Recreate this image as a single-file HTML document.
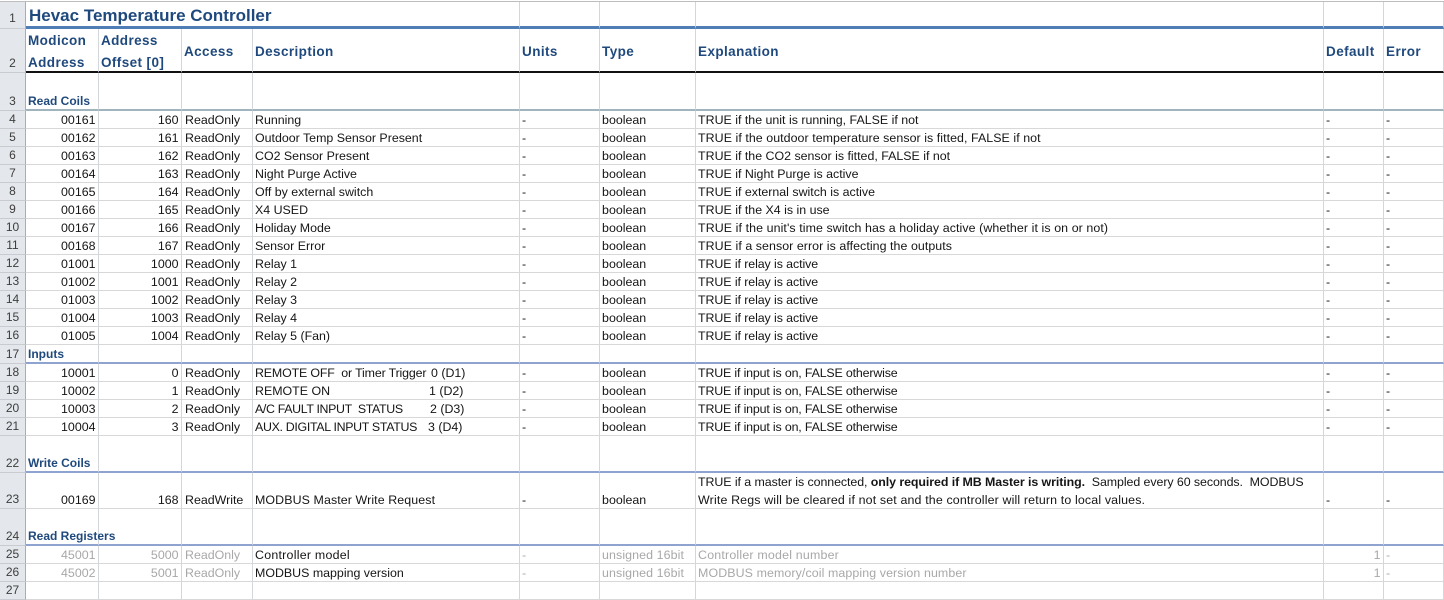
<!DOCTYPE html>
<html><head><meta charset="utf-8"><title>Hevac Temperature Controller</title>
<style>
html,body{margin:0;padding:0;background:#fff;width:1444px;height:600px;overflow:hidden}
table{position:absolute;left:0;top:1px;border-collapse:separate;border-spacing:0;table-layout:fixed;width:1444px;font:12.4px/16px "Liberation Sans",sans-serif;color:#151515;border-top:1px solid #bdbdbd}
td{box-sizing:border-box;padding:0 0 0 2px;border-right:1px solid #d3d6da;border-bottom:1px solid #d8d8d8;vertical-align:bottom;white-space:pre;overflow:visible}
td:nth-child(4){padding-left:3px}
td:first-child{background:#e4e7eb;text-align:center;padding:0;border-right:1px solid #a9adb2;border-bottom:1px solid #c8cbcf;color:#3d3d3d;font-size:12px;line-height:17px}
td.n{text-align:right;padding:0 2.5px 0 0}
.g td{color:#a8a8a8}.g td:first-child{color:#3d3d3d}.g td.k{color:#151515}
.r1 td{border-bottom:3px solid #4f7db5}
.r1 td:first-child{border-bottom:1px solid #c8cbcf;line-height:19px}
.r1 .t{font-size:17px;font-weight:bold;color:#1f497d;line-height:22px;padding-left:3px}
.r1 .t span{position:relative;top:1px}
.r2 td{border-bottom:2px solid #111;color:#1f497d;font-weight:bold;font-size:13.5px;letter-spacing:.4px;line-height:22px;vertical-align:middle;padding:3px 0 0 2px}
.r2 td div{margin:-2px 0 -3px}
.r2 td:first-child{border-bottom:1px solid #c8cbcf;color:#3d3d3d;font-weight:normal;font-size:12px;letter-spacing:0;vertical-align:bottom;line-height:17px;padding:0}
.h td{color:#1f497d}.h td:first-child{color:#3d3d3d}.h td.b{font-weight:bold;font-size:12px}
.h3 td{border-bottom:2px solid #9fb4bd}.h4 td{border-bottom:2px solid #8ea3cf}
.h3 td:first-child,.h4 td:first-child{border-bottom:1px solid #c8cbcf}
i{font-style:normal;display:inline-block}
b{font-weight:bold}
.w{line-height:18px;margin-bottom:-1px}
.s1{letter-spacing:-.16px}.s2{letter-spacing:-.08px}
</style></head><body>
<table>
<colgroup><col style="width:26px"><col style="width:73px"><col style="width:83px"><col style="width:71px"><col style="width:267px"><col style="width:80px"><col style="width:96px"><col style="width:628px"><col style="width:60px"><col style="width:60px"></colgroup>
<tr class="r1" style="height:27px"><td>1</td><td class="t" colspan="4"><span>Hevac Temperature Controller</span></td><td></td><td></td><td></td><td></td><td></td></tr>
<tr class="r2" style="height:44px"><td>2</td><td><div>Modicon
Address</div></td><td><div>Address
Offset [0]</div></td><td>Access</td><td>Description</td><td>Units</td><td>Type</td><td>Explanation</td><td>Default</td><td>Error</td></tr>
<tr class="h h3" style="height:38px"><td>3</td><td class="b">Read Coils</td><td></td><td></td><td></td><td></td><td></td><td></td><td></td><td></td></tr>
<tr style="height:18px"><td>4</td><td class="n">00161</td><td class="n">160</td><td>ReadOnly</td><td>Running</td><td>-</td><td>boolean</td><td>TRUE if the unit is running, FALSE if not</td><td>-</td><td>-</td></tr>
<tr style="height:18px"><td>5</td><td class="n">00162</td><td class="n">161</td><td>ReadOnly</td><td>Outdoor Temp Sensor Present</td><td>-</td><td>boolean</td><td style="letter-spacing:.06px">TRUE if the outdoor temperature sensor is fitted, FALSE if not</td><td>-</td><td>-</td></tr>
<tr style="height:18px"><td>6</td><td class="n">00163</td><td class="n">162</td><td>ReadOnly</td><td>CO2 Sensor Present</td><td>-</td><td>boolean</td><td>TRUE if the CO2 sensor is fitted, FALSE if not</td><td>-</td><td>-</td></tr>
<tr style="height:18px"><td>7</td><td class="n">00164</td><td class="n">163</td><td>ReadOnly</td><td>Night Purge Active</td><td>-</td><td>boolean</td><td>TRUE if Night Purge is active</td><td>-</td><td>-</td></tr>
<tr style="height:18px"><td>8</td><td class="n">00165</td><td class="n">164</td><td>ReadOnly</td><td>Off by external switch</td><td>-</td><td>boolean</td><td>TRUE if external switch is active</td><td>-</td><td>-</td></tr>
<tr style="height:18px"><td>9</td><td class="n">00166</td><td class="n">165</td><td>ReadOnly</td><td>X4 USED</td><td>-</td><td>boolean</td><td>TRUE if the X4 is in use</td><td>-</td><td>-</td></tr>
<tr style="height:18px"><td>10</td><td class="n">00167</td><td class="n">166</td><td>ReadOnly</td><td>Holiday Mode</td><td>-</td><td>boolean</td><td style="letter-spacing:.09px">TRUE if the unit's time switch has a holiday active (whether it is on or not)</td><td>-</td><td>-</td></tr>
<tr style="height:18px"><td>11</td><td class="n">00168</td><td class="n">167</td><td>ReadOnly</td><td>Sensor Error</td><td>-</td><td>boolean</td><td style="letter-spacing:.06px">TRUE if a sensor error is affecting the outputs</td><td>-</td><td>-</td></tr>
<tr style="height:18px"><td>12</td><td class="n">01001</td><td class="n">1000</td><td>ReadOnly</td><td>Relay 1</td><td>-</td><td>boolean</td><td class="s2">TRUE if relay is active</td><td>-</td><td>-</td></tr>
<tr style="height:18px"><td>13</td><td class="n">01002</td><td class="n">1001</td><td>ReadOnly</td><td>Relay 2</td><td>-</td><td>boolean</td><td class="s2">TRUE if relay is active</td><td>-</td><td>-</td></tr>
<tr style="height:18px"><td>14</td><td class="n">01003</td><td class="n">1002</td><td>ReadOnly</td><td>Relay 3</td><td>-</td><td>boolean</td><td class="s2">TRUE if relay is active</td><td>-</td><td>-</td></tr>
<tr style="height:18px"><td>15</td><td class="n">01004</td><td class="n">1003</td><td>ReadOnly</td><td>Relay 4</td><td>-</td><td>boolean</td><td class="s2">TRUE if relay is active</td><td>-</td><td>-</td></tr>
<tr style="height:18px"><td>16</td><td class="n">01005</td><td class="n">1004</td><td>ReadOnly</td><td>Relay 5 (Fan)</td><td>-</td><td>boolean</td><td class="s2">TRUE if relay is active</td><td>-</td><td>-</td></tr>
<tr class="h h4" style="height:19px"><td>17</td><td class="b">Inputs</td><td></td><td></td><td></td><td></td><td></td><td></td><td></td><td></td></tr>
<tr style="height:18px"><td>18</td><td class="n">10001</td><td class="n">0</td><td>ReadOnly</td><td><i style="width:176px;letter-spacing:-.15px">REMOTE OFF  or Timer Trigger</i>0 (D1)</td><td>-</td><td>boolean</td><td class="s1">TRUE if input is on, FALSE otherwise</td><td>-</td><td>-</td></tr>
<tr style="height:18px"><td>19</td><td class="n">10002</td><td class="n">1</td><td>ReadOnly</td><td><i style="width:174px">REMOTE ON</i>1 (D2)</td><td>-</td><td>boolean</td><td class="s1">TRUE if input is on, FALSE otherwise</td><td>-</td><td>-</td></tr>
<tr style="height:18px"><td>20</td><td class="n">10003</td><td class="n">2</td><td>ReadOnly</td><td><i style="width:175px;letter-spacing:-.35px">A/C FAULT INPUT  STATUS</i>2 (D3)</td><td>-</td><td>boolean</td><td class="s1">TRUE if input is on, FALSE otherwise</td><td>-</td><td>-</td></tr>
<tr style="height:18px"><td>21</td><td class="n">10004</td><td class="n">3</td><td>ReadOnly</td><td><i style="width:173px;letter-spacing:-.32px">AUX. DIGITAL INPUT STATUS</i>3 (D4)</td><td>-</td><td>boolean</td><td class="s1">TRUE if input is on, FALSE otherwise</td><td>-</td><td>-</td></tr>
<tr class="h h4" style="height:37px"><td>22</td><td class="b">Write Coils</td><td></td><td></td><td></td><td></td><td></td><td></td><td></td><td></td></tr>
<tr style="height:36px"><td>23</td><td class="n">00169</td><td class="n">168</td><td>ReadWrite</td><td style="letter-spacing:.1px">MODBUS Master Write Request</td><td>-</td><td>boolean</td><td><div class="w"><span style="letter-spacing:-.07px">TRUE if a master is connected, <b>only required if MB Master is writing.</b>  Sampled every 60 seconds.  MODBUS</span>
<span style="letter-spacing:.15px">Write Regs will be cleared if not set and the controller will return to local values.</span></div></td><td>-</td><td>-</td></tr>
<tr class="h h4" style="height:37px"><td>24</td><td class="b">Read Registers</td><td></td><td></td><td></td><td></td><td></td><td></td><td></td><td></td></tr>
<tr class="g" style="height:18px"><td>25</td><td class="n">45001</td><td class="n">5000</td><td>ReadOnly</td><td class="k" style="letter-spacing:.25px">Controller model</td><td>-</td><td style="letter-spacing:.1px">unsigned 16bit</td><td style="letter-spacing:.2px">Controller model number</td><td class="n">1</td><td>-</td></tr>
<tr class="g" style="height:18px"><td>26</td><td class="n">45002</td><td class="n">5001</td><td>ReadOnly</td><td class="k">MODBUS mapping version</td><td>-</td><td style="letter-spacing:.1px">unsigned 16bit</td><td style="letter-spacing:.1px">MODBUS memory/coil mapping version number</td><td class="n">1</td><td>-</td></tr>
<tr style="height:18px"><td>27</td><td></td><td></td><td></td><td></td><td></td><td></td><td></td><td></td><td></td></tr>
</table>
</body></html>
